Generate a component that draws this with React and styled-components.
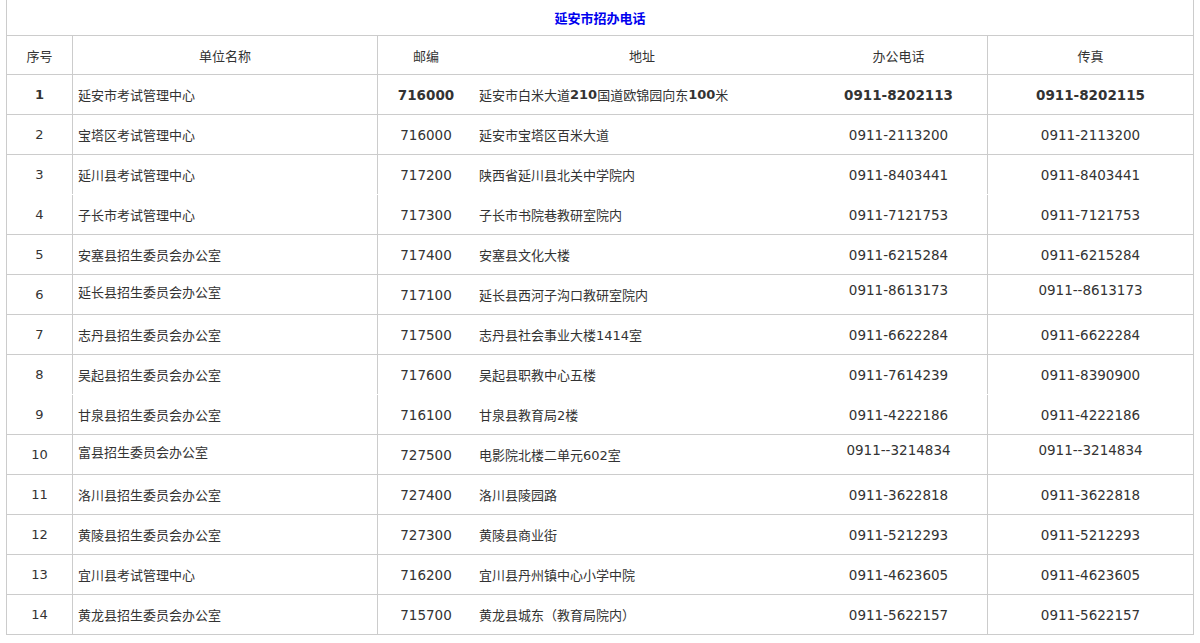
import React from 'react';
import styled, { createGlobalStyle } from 'styled-components';

const Global = createGlobalStyle`
  body { margin: 0; background: #fff; font-family: "DejaVu Sans", "Noto Sans CJK SC", sans-serif; }
`;

const Table = styled.div`
  margin-left: 6px;
  width: 1186px;
  border-left: 1px solid #ccc;
  border-right: 1px solid #ccc;
  font-size: 13px;
  color: #333;
`;

const Title = styled.div`
  height: 35px;
  border-bottom: 1px solid #ccc;
  display: flex;
  align-items: center;
  justify-content: center;
  color: #0000ee;
  font-weight: bold;
  font-size: 13px;
`;

const Row = styled.div`
  display: grid;
  grid-template-columns: 66px 305px 96px 336px 178px 1fr;
  height: ${p => (p.$head ? 38 : 39)}px;
  border-bottom: 1px solid ${p => (p.$noLine ? 'transparent' : '#ccc')};
`;

const Cell = styled.div`
  display: flex;
  align-items: ${p => (p.$top ? 'flex-start' : 'center')};
  padding-top: ${p => (p.$top ? '7px' : '0')};
  justify-content: ${p => (p.$left ? 'flex-start' : 'center')};
  padding-left: ${p => (p.$left ? '5px' : '0')};
  border-right: ${p => (p.$line ? '1px solid #ccc' : 'none')};
  font-weight: ${p => (p.$bold ? 'bold' : 'normal')};
  font-size: ${p => (p.$num ? '13.5px' : '13px')};
  white-space: nowrap;
`;

const B = styled.b`
  font-weight: bold;
`;

const data = [
  ['1', '延安市考试管理中心', '716000', <>延安市白米大道<B>210</B>国道欧锦园向东<B>100</B>米</>, '0911-8202113', '0911-8202115', { bold: true }],
  ['2', '宝塔区考试管理中心', '716000', '延安市宝塔区百米大道', '0911-2113200', '0911-2113200'],
  ['3', '延川县考试管理中心', '717200', '陕西省延川县北关中学院内', '0911-8403441', '0911-8403441', { noLine: true }],
  ['4', '子长市考试管理中心', '717300', '子长市书院巷教研室院内', '0911-7121753', '0911-7121753'],
  ['5', '安塞县招生委员会办公室', '717400', '安塞县文化大楼', '0911-6215284', '0911-6215284'],
  ['6', '延长县招生委员会办公室', '717100', '延长县西河子沟口教研室院内', '0911-8613173', '0911--8613173', { top: true }],
  ['7', '志丹县招生委员会办公室', '717500', '志丹县社会事业大楼1414室', '0911-6622284', '0911-6622284'],
  ['8', '吴起县招生委员会办公室', '717600', '吴起县职教中心五楼', '0911-7614239', '0911-8390900', { noLine: true }],
  ['9', '甘泉县招生委员会办公室', '716100', '甘泉县教育局2楼', '0911-4222186', '0911-4222186'],
  ['10', '富县招生委员会办公室', '727500', '电影院北楼二单元602室', '0911--3214834', '0911--3214834', { top: true }],
  ['11', '洛川县招生委员会办公室', '727400', '洛川县陵园路', '0911-3622818', '0911-3622818'],
  ['12', '黄陵县招生委员会办公室', '727300', '黄陵县商业街', '0911-5212293', '0911-5212293'],
  ['13', '宜川县考试管理中心', '716200', '宜川县丹州镇中心小学中院', '0911-4623605', '0911-4623605'],
  ['14', '黄龙县招生委员会办公室', '715700', '黄龙县城东（教育局院内）', '0911-5622157', '0911-5622157'],
];

export default function App() {
  return (
    <>
      <Global />
      <Table>
        <Title>延安市招办电话</Title>
        <Row $head>
          <Cell $line>序号</Cell>
          <Cell $line>单位名称</Cell>
          <Cell>邮编</Cell>
          <Cell>地址</Cell>
          <Cell $line>办公电话</Cell>
          <Cell>传真</Cell>
        </Row>
        {data.map(([n, name, zip, addr, tel, fax, o = {}]) => (
          <Row key={n} $noLine={o.noLine}>
            <Cell $line $bold={o.bold}>{n}</Cell>
            <Cell $line $left $top={o.top}>{name}</Cell>
            <Cell $num $bold={o.bold}>{zip}</Cell>
            <Cell $left>{addr}</Cell>
            <Cell $line $num $top={o.top} $bold={o.bold}>{tel}</Cell>
            <Cell $num $top={o.top} $bold={o.bold}>{fax}</Cell>
          </Row>
        ))}
      </Table>
    </>
  );
}
